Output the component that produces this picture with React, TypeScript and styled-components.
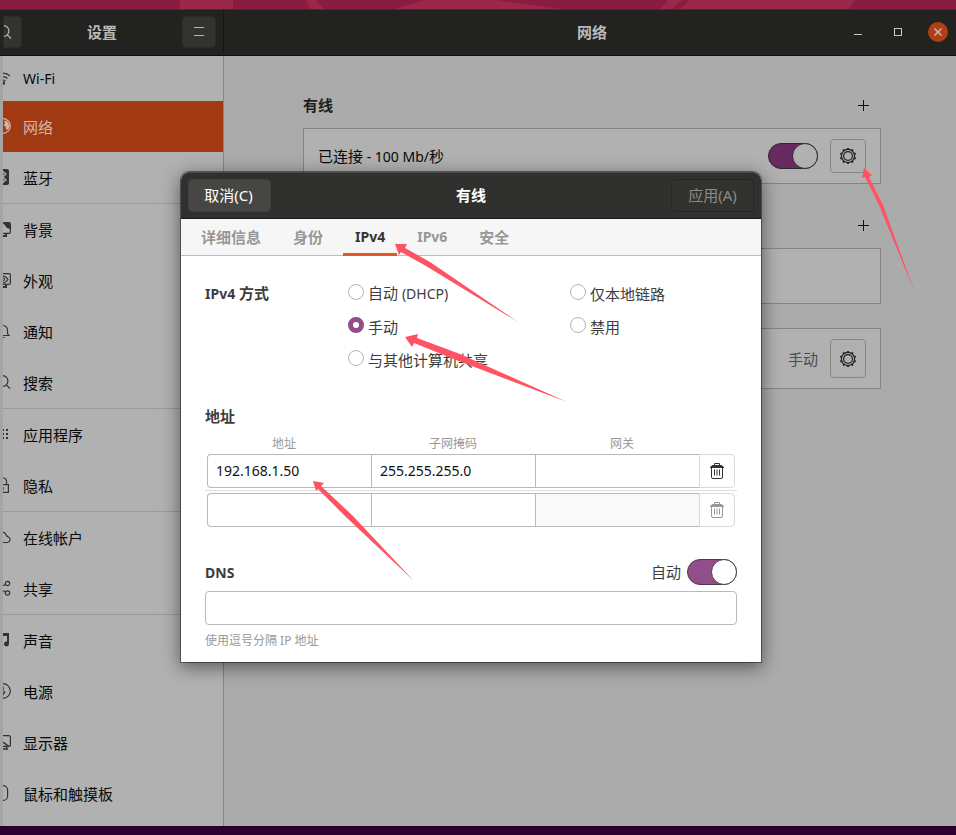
import React, { useState } from "react";
import styled, { createGlobalStyle, css } from "styled-components";

const GlobalStyle = createGlobalStyle`
  *, *::before, *::after { box-sizing: border-box; }
  html, body { margin: 0; height: 100%; }
  #root { height: 100%; }
  body, button, input {
    font-family: "Noto Sans", "Noto Sans CJK SC", sans-serif;
    font-size: 15px;
    line-height: 22px;
  }
  button { padding: 0; cursor: pointer; }
`;

const Desktop = styled.div`
  position: relative;
  display: flex;
  flex-direction: column;
  min-height: 100vh;
  overflow: hidden;
  background: #2c0030;
  padding-bottom: 9px;
`;

const Wallpaper = styled.svg`
  display: block;
  width: 100%;
  height: 9px;
`;

const Window = styled.div`
  flex: 1;
  display: flex;
  flex-direction: column;
  border-left: 3px solid #a4a4a4;
  background: #ababab;
`;

const TitleBar = styled.header`
  display: flex;
  height: 47px;
  margin-left: -3px;
  padding: 0 0 2px 3px;
  background: #222220;
  border-top: 1px solid #343433;
  border-bottom: 1px solid #10100f;
  color: #b9b9b6;
`;

const SideTitle = styled.div`
  display: flex;
  align-items: center;
  justify-content: space-between;
  width: 221px;
  padding-right: 7px;
  border-right: 1px solid #161615;
`;

const MainTitle = styled.div`
  flex: 1;
  display: grid;
  grid-template-columns: 100px 1fr 100px;
  align-items: center;
  padding: 0 8px 0 12px;
`;

const Title = styled.h1`
  margin: 0;
  font-size: 15px;
  line-height: 22px;
  font-weight: 700;
  text-align: center;
`;

const BarButton = styled.button<{ $cut?: boolean }>`
  display: grid;
  place-items: center;
  width: ${(p) => (p.$cut ? 19 : 34)}px;
  height: 32px;
  overflow: hidden;
  justify-content: ${(p) => (p.$cut ? "end" : "center")};
  padding-right: ${(p) => (p.$cut ? 9 : 0)}px;
  color: #b5b5b2;
  background: #333331;
  border: 1px solid #2b2b29;
  border-radius: ${(p) => (p.$cut ? "0 4px 4px 0" : "4px")};
`;

const WindowControls = styled.div`
  grid-column: 3;
  display: flex;
  justify-content: space-between;
`;

const ControlButton = styled.button<{ $close?: boolean }>`
  display: grid;
  place-items: center;
  width: 20px;
  height: 20px;
  border: 0;
  border-radius: 50%;
  color: #c8c8c5;
  background: ${(p) => (p.$close ? "#b03f15" : "transparent")};
`;

const Columns = styled.div`
  flex: 1;
  display: flex;
`;

const Sidebar = styled.nav`
  width: 221px;
  overflow: hidden;
  background: #b1b1b1;
  border-right: 1px solid #858585;
`;

const NavLink = styled.a<{ $active?: boolean; $last?: boolean; $first?: boolean }>`
  display: flex;
  align-items: center;
  gap: 12px;
  height: ${(p) => (p.$first ? 45 : p.$last ? 52 : 51)}px;
  color: ${(p) => (p.$active ? "#d3b5a8" : "#080808")};
  background: ${(p) => (p.$active ? "#a13a12" : "transparent")};
  border-bottom: ${(p) => (p.$last ? "1px solid #999999" : "0")};
  text-decoration: none;
`;

const NavIcon = styled.svg<{ $light?: boolean }>`
  flex: none;
  width: 16px;
  height: 16px;
  margin: 0 0 2px -8px;
  color: ${(p) => (p.$light ? "#d3b5a8" : "#333333")};
`;

const Main = styled.main`
  flex: 1;
  padding: 38px 16px 16px 20px;
`;

const Panel = styled.div`
  max-width: 578px;
  margin: 0 auto;
`;

const SectionHead = styled.div`
  display: flex;
  align-items: center;
  height: 22px;
  margin-bottom: 12px;
  padding-right: 11px;
`;

const SectionTitle = styled.h2`
  margin: 0;
  font-size: 15px;
  line-height: 22px;
  font-weight: 700;
  color: #1f1f1f;
`;

const PlainButton = styled.button`
  display: grid;
  place-items: center;
  margin-left: auto;
  border: 0;
  background: none;
  color: #111111;
`;

const Card = styled.div<{ $tall?: boolean; $space?: number }>`
  display: flex;
  align-items: center;
  gap: 12px;
  height: ${(p) => (p.$tall ? 61 : 56)}px;
  margin-bottom: ${(p) => p.$space ?? 0}px;
  padding: 0 14px;
  background: #b1b1b1;
  border: 1px solid #858585;
  color: #080808;
`;

const CardLabel = styled.span<{ $end?: boolean }>`
  flex: 1;
  text-align: ${(p) => (p.$end ? "right" : "left")};
  color: ${(p) => (p.$end ? "#4c4c4c" : "#080808")};
`;

const GearButton = styled.button<{ $tall?: boolean }>`
  display: grid;
  place-items: center;
  width: 36px;
  height: ${(p) => (p.$tall ? 39 : 34)}px;
  color: #222222;
  background: #b0b0b0;
  border: 1px solid #868686;
  border-radius: 4px;
`;

const Switch = styled.input<{ $dim?: boolean }>`
  appearance: none;
  flex: none;
  display: flex;
  width: 50px;
  height: 26px;
  margin: 0;
  border: 1px solid ${(p) => (p.$dim ? "#2b2b2b" : "#4a3a48")};
  border-radius: 13px;
  background: ${(p) => (p.$dim ? "#672a61" : "#924d8b")};
  cursor: pointer;

  &::before {
    content: "";
    width: 26px;
    height: 26px;
    margin: -1px;
    border: 1px solid ${(p) => (p.$dim ? "#2b2b2b" : "#444444")};
    border-radius: 50%;
    background: ${(p) => (p.$dim ? "#b1b1b1" : "#ffffff")};
  }
  &:checked::before { margin-left: auto; }
  &:not(:checked) { background: #cfcfcf; }
`;

const Overlay = styled.div`
  position: absolute;
  inset: 0;
  display: grid;
  place-items: center;
  padding: 0 14px 2px 0;
`;

const Dialog = styled.section`
  width: 100%;
  max-width: 580px;
  border-radius: 8px 8px 0 0;
  background: #ffffff;
  color: #3d3d3d;
  box-shadow: 0 0 0 1px rgba(0, 0, 0, 0.4), 0 4px 18px 1px rgba(0, 0, 0, 0.5);
`;

const DialogBar = styled.header`
  display: grid;
  grid-template-columns: 83px 1fr 83px;
  align-items: center;
  height: 47px;
  padding: 0 7px;
  border-radius: 8px 8px 0 0;
  border-top: 1px solid #494947;
  border-bottom: 1px solid #1b1b1a;
  background: #30302e;
  color: #ffffff;
`;

const DialogButton = styled.button`
  height: 33px;
  padding: 0 2px 0 0;
  border: 1px solid #3f3f3d;
  border-radius: 4px;
  background: #464644;
  color: #ffffff;

  &:disabled {
    padding: 0;
    border-color: #232822;
    background: #323331;
    color: #8b8b89;
  }
`;

const Tabs = styled.div`
  display: flex;
  gap: 8px;
  height: 37px;
  padding: 0 8px;
  background: #f6f6f6;
  border-bottom: 1px solid #bdbdbd;
`;

const Tab = styled.button<{ $active: boolean }>`
  height: 37px;
  padding: 2px 12px 0;
  border: 0;
  border-bottom: 3px solid ${(p) => (p.$active ? "#e95420" : "transparent")};
  background: none;
  color: ${(p) => (p.$active ? "#333333" : "#979797")};
  font-weight: 700;
`;

const Latin = styled.span`
  font-size: 14px;
`;

const DialogBody = styled.div`
  display: flex;
  flex-direction: column;
  padding: 21px 24px 11px;
`;

const MethodGrid = styled.fieldset`
  display: grid;
  grid-template-columns: 143px 222px 1fr;
  grid-auto-rows: 33px;
  align-items: center;
  margin: 0 0 28px;
  padding: 0;
  border: 0;
`;

const Heading = styled.h3`
  margin: 0;
  padding-top: 1px;
  font-size: 15px;
  line-height: 22px;
  font-weight: 700;
`;

const Choice = styled.label<{ $col: number }>`
  grid-column: ${(p) => p.$col};
  display: flex;
  align-items: center;
  gap: 4px;
  white-space: nowrap;
`;

const Radio = styled.input`
  appearance: none;
  width: 16px;
  height: 16px;
  margin: 0 0 2px;
  border: 1px solid #b3b3b3;
  border-radius: 50%;
  background: #ffffff;

  &:checked { border: 5px solid #924d8b; }
`;

const ChoiceText = styled.span`
  padding-top: 1px;
`;

const ColumnNames = styled.div`
  display: flex;
  justify-content: space-between;
  margin-top: 7px;
  padding: 0 103px 0 67px;
  font-size: 12px;
  line-height: 20px;
  color: #999999;
`;

const AddressRow = styled.div`
  display: grid;
  grid-template-columns: 1fr 1fr 1fr 36px;
  padding: 0 2px;

  & + & {
    margin-top: 2px;
    padding-top: 2px;
    border-top: 1px solid #dddddd;
  }
`;

const field = css`
  width: 100%;
  min-width: 0;
  height: 34px;
  padding: 0 9px;
  border: 1px solid #b9b9b9;
  background: #ffffff;
  color: #111111;
  font-size: 14px;
  outline: none;
`;

const AddressInput = styled.input`
  ${field}
  border-right: 0;
  padding: 0 8px;

  &:first-child { border-radius: 4px 0 0 4px; }
  &:disabled { background: #f9f9f9; }
`;

const TrashButton = styled.button`
  display: grid;
  place-items: center;
  height: 34px;
  border: 1px solid #d9d9d9;
  border-radius: 0 4px 4px 0;
  background: #ffffff;
  color: #333333;

  &:disabled { color: #999999; }
`;

const DnsHead = styled.div`
  display: flex;
  align-items: center;
  justify-content: space-between;
  margin: 32px 0 6px;
`;

const SwitchLabel = styled.label`
  display: flex;
  align-items: center;
  gap: 6px;
`;

const DnsInput = styled.input`
  ${field}
  border-radius: 4px;
`;

const Hint = styled.small`
  margin-top: 6px;
  font-size: 12px;
  line-height: 20px;
  color: #999999;
`;

const Pointers = styled.svg`
  position: absolute;
  left: 0;
  top: 0;
  pointer-events: none;
`;

const line = { fill: "none", stroke: "currentColor", strokeWidth: 1.2 };

const icons: Record<string, React.ReactNode> = {
  wifi: (
    <g {...line}>
      <path d="M1 6a10 10 0 0 1 14 0M3.500 8.500a6.500 6.500 0 0 1 9 0M5.500 11a4 4 0 0 1 5 0" />
      <circle cx="8" cy="13" r="1.500" fill="currentColor" />
    </g>
  ),
  globe: (
    <g {...line}>
      <circle cx="8" cy="8" r="7.300" />
      <path d="M9 2.500l3.500 1 2 4-1 3.500-2 1-1-3.500-2-1.500 1.500-1.500z" fill="currentColor" stroke="none" />
    </g>
  ),
  bluetooth: (
    <g>
      <rect x="2" y="0" width="12" height="16" rx="2" fill="currentColor" />
      <path d="M5 5l6 6-3 2.500v-11L11 5l-6 6" fill="none" stroke="#b1b1b1" strokeWidth="1.200" />
    </g>
  ),
  background: (
    <g {...line}>
      <rect x="0.600" y="1.600" width="14.800" height="10.800" rx="1.500" />
      <path d="M8 2h7v6l-3-1z" fill="currentColor" stroke="none" />
      <path d="M4 15h8M11 12v3" strokeWidth="2" />
    </g>
  ),
  appearance: (
    <g {...line}>
      <rect x="0.600" y="1.600" width="14.800" height="10.800" rx="1.500" />
      <path d="M3 7.500c3-4.500 7-4.500 10 0c-3 4.500-7 4.500-10 0z" />
      <circle cx="8" cy="7.500" r="1.500" />
      <path d="M4 15h8M11 12v3" strokeWidth="2" />
    </g>
  ),
  bell: (
    <g {...line}>
      <path d="M2 12.500h12l-1.500-2V7a4.500 4.500 0 0 0-9 0v3.500zM6.500 14.500h3" />
    </g>
  ),
  search: (
    <g {...line}>
      <circle cx="7.500" cy="7" r="5.400" />
      <path d="M11.300 10.800L15 14.500" />
    </g>
  ),
  apps: (
    <g fill="currentColor">
      {[3, 7, 11].map((y) =>
        [3, 7, 11].map((x) => <rect key={`${x}-${y}`} x={x} y={y} width="2" height="2" />)
      )}
    </g>
  ),
  lock: (
    <g {...line}>
      <rect x="2.600" y="7.600" width="10.800" height="7.800" />
      <path d="M4.500 7.500V4.500a3.500 3.500 0 0 1 7 0v3M8 10v3" />
    </g>
  ),
  cloud: (
    <g {...line}>
      <path d="M4 13.500h8.500a3 3 0 0 0 .5-5.800c-1-.2-1.500-.7-1.800-1.700A4 4 0 0 0 3.500 7 3.300 3.300 0 0 0 4 13.500z" />
    </g>
  ),
  share: (
    <g {...line}>
      <circle cx="3" cy="8" r="2.200" />
      <circle cx="12.500" cy="3.500" r="2.200" />
      <circle cx="12.500" cy="13" r="2.200" />
      <path d="M5 7l5.500-2.500M5 9l5.500 3" />
    </g>
  ),
  music: (
    <g fill="currentColor">
      <path d="M4 1h10v11a2.500 2.500 0 1 1-2-2.400V4H6v9a2.500 2.500 0 1 1-2-2.400z" />
    </g>
  ),
  power: (
    <g {...line}>
      <circle cx="8" cy="8" r="7.300" />
      <path d="M9 3L6 8.500h5L8 13z" fill="currentColor" stroke="none" />
    </g>
  ),
  display: (
    <g {...line}>
      <rect x="0.600" y="1.600" width="14.800" height="10.800" rx="1.500" />
      <path d="M8 8l6 4.500M4 15h9M11.500 12v3" strokeWidth="1.500" />
    </g>
  ),
  mouse: (
    <g {...line}>
      <rect x="3.600" y="0.600" width="9" height="14.800" rx="4.500" />
    </g>
  ),
};

type NavEntry = { label: string; icon: string; last?: boolean; active?: boolean };

const navEntries: NavEntry[] = [
  { label: "Wi-Fi", icon: "wifi" },
  { label: "网络", icon: "globe", active: true },
  { label: "蓝牙", icon: "bluetooth", last: true },
  { label: "背景", icon: "background" },
  { label: "外观", icon: "appearance" },
  { label: "通知", icon: "bell" },
  { label: "搜索", icon: "search", last: true },
  { label: "应用程序", icon: "apps" },
  { label: "隐私", icon: "lock", last: true },
  { label: "在线帐户", icon: "cloud" },
  { label: "共享", icon: "share", last: true },
  { label: "声音", icon: "music" },
  { label: "电源", icon: "power" },
  { label: "显示器", icon: "display" },
  { label: "鼠标和触摸板", icon: "mouse" },
];

const tabs = ["详细信息", "身份", "IPv4", "IPv6", "安全"];

type Method = { id: string; label: React.ReactNode; col: number };

const methods: Method[] = [
  { id: "auto", label: <>自动 <Latin>(DHCP)</Latin></>, col: 2 },
  { id: "link-local", label: "仅本地链路", col: 3 },
  { id: "manual", label: "手动", col: 2 },
  { id: "disabled", label: "禁用", col: 3 },
  { id: "shared", label: "与其他计算机共享", col: 2 },
];

const addressColumns = ["地址", "子网掩码", "网关"];

const teeth = Array.from({ length: 10 }, (_, i) => i * 36);

const Gear = () => (
  <svg width="18" height="18" viewBox="0 0 18 18" fill="none" stroke="currentColor">
    <circle cx="9" cy="9" r="6.600" strokeWidth="1.200" />
    <circle cx="9" cy="9" r="4.400" strokeWidth="1.200" />
    {teeth.map((a) => (
      <path key={a} d="M8 1.700h2" strokeWidth="1.600" transform={`rotate(${a} 9 9)`} />
    ))}
  </svg>
);

const Plus = () => (
  <svg width="13" height="13" viewBox="0 0 13 13" stroke="currentColor">
    <path d="M1 6.500h11M6.500 1v11" />
  </svg>
);

const Trash = () => (
  <svg width="14" height="16" viewBox="0 0 14 16" fill="none" stroke="currentColor">
    <path d="M4.500 2.500v-2h5v2" />
    <path d="M0 5V4L2.500 2h9L14 4v1z" fill="currentColor" stroke="none" />
    <path d="M1.500 4.500V14q0 1.500 1.500 1.500h8q1.500 0 1.500-1.500V4.500" />
    <path d="M4.500 6.500v6M7 6.500v6M9.500 6.500v6" />
  </svg>
);

export default function App() {
  const [tab, setTab] = useState("IPv4");
  const [method, setMethod] = useState("manual");

  return (
    <Desktop>
      <GlobalStyle />
      <Wallpaper viewBox="0 0 956 9" preserveAspectRatio="none" aria-hidden="true">
        <rect width="956" height="9" fill="#8a1c44" />
        <path
          d="M180 0h53v9h-53zM306 0h10l8 9h-14zM425 0h70l65 9H395zM668 0h14l-10 9h-12zM690 0h165l-6 9H680z"
          fill="#9a2849"
        />
      </Wallpaper>
      <Window>
        <TitleBar>
          <SideTitle>
            <BarButton $cut aria-label="搜索">
              <svg width="16" height="16" viewBox="0 0 16 16">{icons.search}</svg>
            </BarButton>
            <Title>设置</Title>
            <BarButton aria-label="菜单">
              <svg width="10" height="10" viewBox="0 0 10 10" stroke="currentColor">
                <path d="M0 0.500h10M0 8.500h10" />
              </svg>
            </BarButton>
          </SideTitle>
          <MainTitle>
            <span />
            <Title>网络</Title>
            <WindowControls>
              <ControlButton aria-label="最小化">
                <svg width="8" height="8" viewBox="0 0 8 8" stroke="currentColor">
                  <path d="M0 6.500h8" />
                </svg>
              </ControlButton>
              <ControlButton aria-label="最大化">
                <svg width="8" height="8" viewBox="0 0 8 8" fill="none" stroke="currentColor">
                  <rect x="0.500" y="0.500" width="7" height="7" />
                </svg>
              </ControlButton>
              <ControlButton $close aria-label="关闭">
                <svg width="8" height="8" viewBox="0 0 8 8" stroke="currentColor" strokeWidth="1.300">
                  <path d="M0.500 0.500l7 7M7.500 0.500l-7 7" />
                </svg>
              </ControlButton>
            </WindowControls>
          </MainTitle>
        </TitleBar>
        <Columns>
          <Sidebar>
            {navEntries.map((e, i) => (
              <NavLink key={e.label} href="#" $active={e.active} $last={e.last} $first={i === 0}>
                <NavIcon viewBox="0 0 16 16" $light={e.active}>{icons[e.icon]}</NavIcon>
                {i === 0 ? <Latin>{e.label}</Latin> : e.label}
              </NavLink>
            ))}
          </Sidebar>
          <Main>
            <Panel>
              <SectionHead>
                <SectionTitle>有线</SectionTitle>
                <PlainButton aria-label="添加有线连接"><Plus /></PlainButton>
              </SectionHead>
              <Card $space={30}>
                <CardLabel>已连接<Latin> - 100 Mb/</Latin>秒</CardLabel>
                <Switch type="checkbox" role="switch" defaultChecked $dim aria-label="有线" />
                <GearButton aria-label="有线选项"><Gear /></GearButton>
              </Card>
              <SectionHead>
                <PlainButton aria-label="添加连接"><Plus /></PlainButton>
              </SectionHead>
              <Card $space={24} />
              <Card $tall>
                <CardLabel $end>手动</CardLabel>
                <GearButton $tall aria-label="代理选项"><Gear /></GearButton>
              </Card>
            </Panel>
          </Main>
        </Columns>
      </Window>

      <Overlay>
        <Dialog role="dialog" aria-label="有线">
          <DialogBar>
            <DialogButton>取消(C)</DialogButton>
            <Title>有线</Title>
            <DialogButton disabled>应用(A)</DialogButton>
          </DialogBar>
          <Tabs role="tablist">
            {tabs.map((t) => (
              <Tab key={t} role="tab" aria-selected={t === tab} $active={t === tab} onClick={() => setTab(t)}>
                {t.startsWith("IP") ? <Latin>{t}</Latin> : t}
              </Tab>
            ))}
          </Tabs>
          <DialogBody>
            <MethodGrid aria-label="IPv4 方式">
              <Heading><Latin>IPv4</Latin> 方式</Heading>
              {methods.map((m) => (
                <Choice key={m.id} $col={m.col}>
                  <Radio
                    type="radio"
                    name="method"
                    checked={method === m.id}
                    onChange={() => setMethod(m.id)}
                  />
                  <ChoiceText>{m.label}</ChoiceText>
                </Choice>
              ))}
            </MethodGrid>

            <Heading>地址</Heading>
            <ColumnNames>
              {addressColumns.map((c) => <span key={c}>{c}</span>)}
            </ColumnNames>
            <AddressRow>
              <AddressInput aria-label="地址" defaultValue="192.168.1.50" />
              <AddressInput aria-label="子网掩码" defaultValue="255.255.255.0" />
              <AddressInput aria-label="网关" />
              <TrashButton aria-label="删除地址"><Trash /></TrashButton>
            </AddressRow>
            <AddressRow>
              <AddressInput aria-label="地址" />
              <AddressInput aria-label="子网掩码" />
              <AddressInput aria-label="网关" disabled />
              <TrashButton aria-label="删除地址" disabled><Trash /></TrashButton>
            </AddressRow>

            <DnsHead>
              <Heading><Latin>DNS</Latin></Heading>
              <SwitchLabel>
                自动
                <Switch type="checkbox" role="switch" defaultChecked />
              </SwitchLabel>
            </DnsHead>
            <DnsInput aria-label="DNS" />
            <Hint>使用逗号分隔 IP 地址</Hint>
          </DialogBody>
        </Dialog>
      </Overlay>

      <Pointers width="956" height="835" viewBox="0 0 956 835" fill="#ff5263" aria-hidden="true">
        <path d="M864 168L872 175L869 177L883 205L915 293L879 205L865 177L862 178Z" />
        <path d="M395 244L407 244L405 248L430 262L518 322L426 266L401 252L399 255Z" />
        <path d="M405 337L418 334L417 338L460 354L567 402L456 360L414 343L412 347Z" />
        <path d="M313 481L324 483L321 486L352 515L414 581L347 518L318 489L316 491Z" />
      </Pointers>
    </Desktop>
  );
}
